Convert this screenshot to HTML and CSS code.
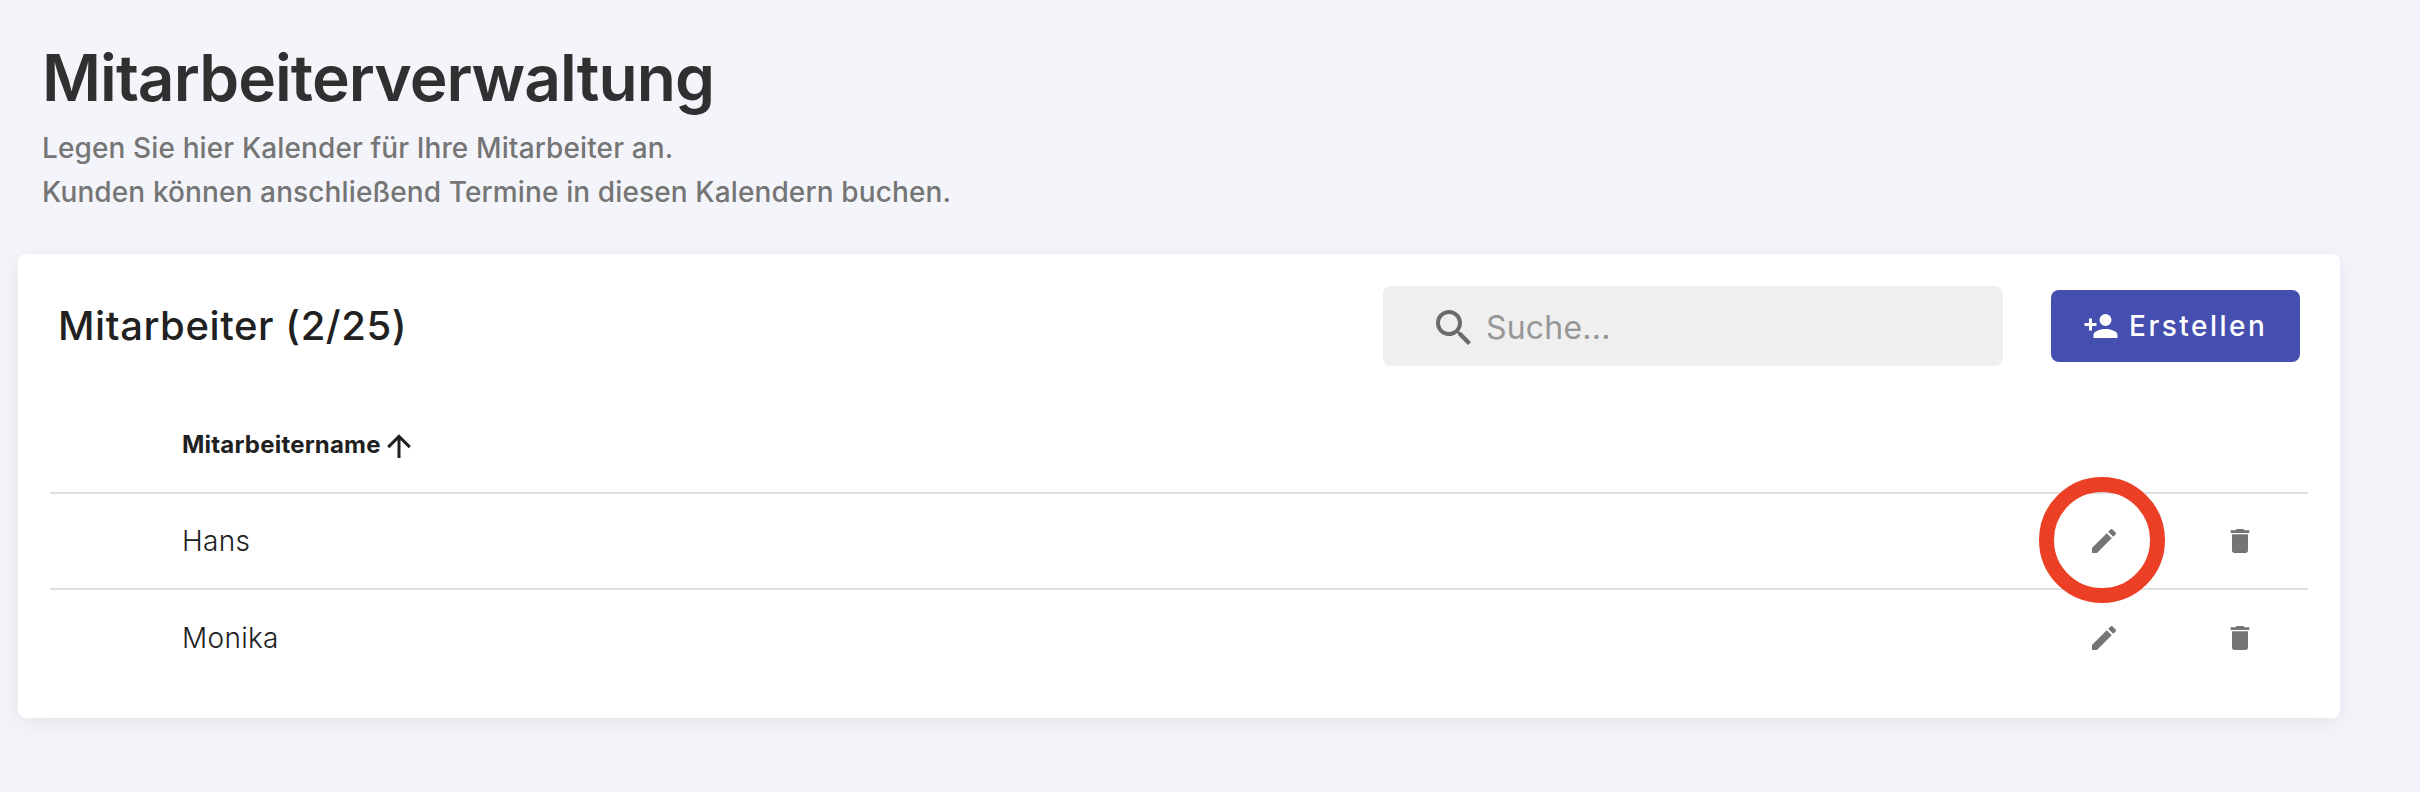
FILE: index.html
```html
<!DOCTYPE html>
<html lang="de">
<head>
    <meta charset="UTF-8">
    <meta name="viewport" content="width=device-width, initial-scale=1.0">
    <title>Mitarbeiterverwaltung</title>
    <link rel="stylesheet" href="styles.css">
</head>
<body>
    <div class="header">
        <h1>Mitarbeiterverwaltung</h1>
        <p>Legen Sie hier Kalender für Ihre Mitarbeiter an.<br>
        Kunden können anschließend Termine in diesen Kalendern buchen.</p>
    </div>
    <div class="card">
        <div class="toolbar">
            <h2>Mitarbeiter (2/25)</h2>
            <label class="search">
                <svg class="icon-search" viewBox="0 0 24 24"><path d="M9.5,3A6.5,6.5 0 0,1 16,9.5C16,11.11 15.41,12.59 14.44,13.73L14.71,14H15.5L20.5,19L19,20.5L14,15.5V14.71L13.73,14.44C12.59,15.41 11.11,16 9.5,16A6.5,6.5 0 0,1 3,9.5A6.5,6.5 0 0,1 9.5,3M9.5,5C7,5 5,7 5,9.5C5,12 7,14 9.5,14C12,14 14,12 14,9.5C14,7 12,5 9.5,5Z"/></svg>
                <input type="text" placeholder="Suche...">
            </label>
            <button class="button" id="create">
                <svg class="icon-add" viewBox="0 0 24 24"><path d="M15,14C12.33,14 7,15.33 7,18V20H23V18C23,15.33 17.67,14 15,14M6,10V7H4V10H1V12H4V15H6V12H9V10M15,12A4,4 0 0,0 19,8A4,4 0 0,0 15,4A4,4 0 0,0 11,8A4,4 0 0,0 15,12Z"/></svg>
                <span>Erstellen</span>
            </button>
        </div>
        <div class="table">
            <div class="row head">
                <span>Mitarbeitername</span>
                <svg class="icon-sort" viewBox="0 0 24 24"><path d="M13,20H11V8L5.5,13.5L4.08,12.08L12,4.16L19.92,12.08L18.5,13.5L13,8V20Z"/></svg>
            </div>
            <div class="row">
                <span class="name">Hans</span>
                <a class="action edit marked" title="Bearbeiten">
                    <svg viewBox="0 0 24 24"><path d="M20.71,7.04C21.1,6.65 21.1,6 20.71,5.63L18.37,3.29C18,2.9 17.35,2.9 16.96,3.29L15.12,5.12L18.87,8.87M3,17.25V21H6.75L17.81,9.93L14.06,6.18L3,17.25Z"/></svg>
                </a>
                <a class="action delete" title="Löschen">
                    <svg viewBox="0 0 24 24"><path d="M19,4H15.5L14.5,3H9.5L8.5,4H5V6H19M6,19A2,2 0 0,0 8,21H16A2,2 0 0,0 18,19V7H6V19Z"/></svg>
                </a>
            </div>
            <div class="row">
                <span class="name">Monika</span>
                <a class="action edit" title="Bearbeiten">
                    <svg viewBox="0 0 24 24"><path d="M20.71,7.04C21.1,6.65 21.1,6 20.71,5.63L18.37,3.29C18,2.9 17.35,2.9 16.96,3.29L15.12,5.12L18.87,8.87M3,17.25V21H6.75L17.81,9.93L14.06,6.18L3,17.25Z"/></svg>
                </a>
                <a class="action delete" title="Löschen">
                    <svg viewBox="0 0 24 24"><path d="M19,4H15.5L14.5,3H9.5L8.5,4H5V6H19M6,19A2,2 0 0,0 8,21H16A2,2 0 0,0 18,19V7H6V19Z"/></svg>
                </a>
            </div>
        </div>
    </div>
</body>
</html>
```
FILE: styles.css
```css
:root {
    --page-bg: #f4f5fb;
    --primary: #444fb0;
    --text: #212121;
    --muted: #757575;
    --line: #e0e0e0;
    --marker: #eb4026;
}

*,
*::after {
    box-sizing: border-box;
}

body {
    margin: 0;
    padding: 38px 80px 74px 18px;
    background-color: var(--page-bg);
    color: var(--text);
    font-family: Inter, sans-serif;
}

svg {
    display: block;
    flex: none;
    fill: currentColor;
}

.header {
    height: 216px;
    padding-left: 24px;
}

h1 {
    margin: 0;
    font-size: 64px;
    font-weight: 600;
    line-height: 80px;
    letter-spacing: -0.94px;
    color: #303030;
}

p {
    margin: 8px 0 0;
    font-size: 28px;
    font-weight: 500;
    line-height: 44px;
    letter-spacing: 0.12px;
    color: var(--muted);
}

.card {
    height: 464px;
    padding: 32px;
    border-radius: 8px;
    background-color: #fff;
    box-shadow: 0 6px 24px rgba(20, 10, 30, 0.07);
}

.toolbar {
    display: flex;
    align-items: center;
    height: 80px;
    padding: 0 8px;
}

h2 {
    flex: 1;
    margin: 0;
    padding-bottom: 1px;
    font-size: 40px;
    font-weight: 500;
    letter-spacing: 0.58px;
}

.search {
    display: flex;
    align-items: center;
    gap: 8px;
    width: 620px;
    height: 80px;
    padding: 4px 47px 0;
    border-radius: 8px;
    background-color: #efefef;
    color: #6b6b6b;
}

.search input {
    width: 100%;
    padding: 0 0 2px;
    border: none;
    outline: none;
    background: none;
    font-family: inherit;
    font-size: 32px;
    letter-spacing: 0.2px;
}

.search input::placeholder {
    color: #979797;
}

.icon-search {
    width: 48px;
    height: 48px;
}

.button {
    display: flex;
    align-items: center;
    gap: 10px;
    width: 249px;
    height: 72px;
    margin-left: 48px;
    padding: 0 0 0 32px;
    border: none;
    border-radius: 8px;
    background-color: var(--primary);
    color: #fff;
    font-family: inherit;
    font-size: 28px;
    font-weight: 500;
    letter-spacing: 2.5px;
    cursor: pointer;
}

.icon-add,
.icon-sort {
    width: 36px;
    height: 36px;
}

.table {
    padding-top: 34px;
}

.row {
    display: flex;
    align-items: center;
    height: 96px;
    padding: 0 52px 0 132px;
    font-size: 28px;
}

.row + .row {
    border-top: 2px solid var(--line);
}

.row:last-child {
    height: 98px;
}

.head {
    height: 92px;
    font-size: 24px;
    font-weight: 700;
    letter-spacing: 0.2px;
}

.head span {
    padding-bottom: 4px;
}

.name {
    flex: 1;
    font-weight: 300;
    letter-spacing: 0.3px;
}

.action {
    position: relative;
    color: var(--muted);
    cursor: pointer;
}

.action svg {
    width: 32px;
    height: 32px;
}

.edit {
    margin-right: 104px;
}

/* highlight ring around the edit icon */
.marked::after {
    content: "";
    position: absolute;
    top: -48px;
    left: -49px;
    width: 126px;
    height: 126px;
    border: 15px solid var(--marker);
    border-radius: 50%;
}
```
